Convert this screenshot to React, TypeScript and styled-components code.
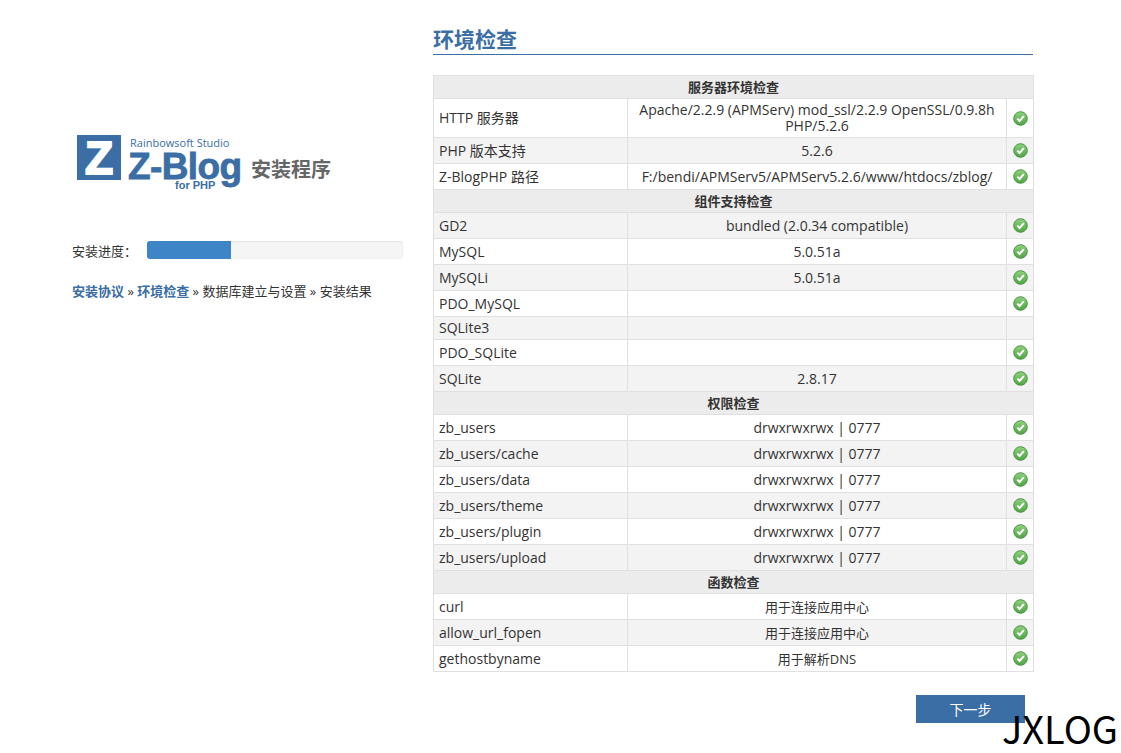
import React from 'react';
import styled, { createGlobalStyle } from 'styled-components';

const GlobalStyle = createGlobalStyle`
  html, body {
    margin: 0;
    padding: 0;
    background: #fff;
  }
  body {
    font-family: 'Open Sans', 'Noto Sans CJK SC', sans-serif;
    font-size: 14px;
    color: #333;
  }
`;

const Page = styled.div`
  position: relative;
  width: 1121px;
  height: 753px;
  overflow: hidden;
  display: flex;
  align-items: flex-start;
  gap: 30px;
  padding-left: 72px;
  box-sizing: border-box;
`;

const LeftPanel = styled.div`
  width: 331px;
  padding-top: 133px;
  flex-shrink: 0;
`;

const LogoRow = styled.div`
  padding-left: 5px;
  height: 62px;
`;

const ProgressRow = styled.div`
  display: flex;
  align-items: center;
  margin-top: 46px;
  height: 18px;
  font-size: 13px;
`;

const ProgressLabel = styled.span`
  width: 75px;
  flex-shrink: 0;
`;

const ProgressTrack = styled.div`
  flex: 1;
  height: 18px;
  background: #f5f5f5;
  border-radius: 3px;
  overflow: hidden;
  box-shadow: inset 0 1px 2px rgba(0, 0, 0, 0.08);
`;

const ProgressFill = styled.div`
  height: 100%;
  background: #3d85c6;
`;

const Steps = styled.div`
  margin-top: 23px;
  font-size: 13px;
  line-height: 18px;
  white-space: nowrap;
`;

const StepDone = styled.b`
  color: #3a6ea5;
`;

const RightPanel = styled.div`
  width: 600px;
  padding-top: 24px;
`;

const Title = styled.h1`
  margin: 0;
  height: 30px;
  font-size: 21px;
  line-height: 30px;
  font-weight: 700;
  color: #3a6ea5;
  border-bottom: 1px solid #3a6ea5;
`;

const CheckTable = styled.table`
  margin-top: 20px;
  width: 600px;
  table-layout: fixed;
  border-collapse: collapse;
  line-height: 16px;
`;

const HeadCell = styled.th`
  padding: 3px 5px;
  border: 1px solid #e0e0e0;
  background: #ececec;
  font-size: 13px;
  font-weight: 700;
  text-align: center;
`;

const Row = styled.tr<{ $alt: boolean }>`
  background: ${(p) => (p.$alt ? '#f3f3f3' : '#fff')};
`;

const NameCell = styled.td`
  padding: 3px 5px;
  border: 1px solid #e0e0e0;
`;

const ValueCell = styled.td<{ $small?: boolean }>`
  padding: 3px 5px;
  border: 1px solid #e0e0e0;
  text-align: center;
  font-size: ${(p) => (p.$small ? '13px' : '14px')};
`;

const IconCell = styled.td`
  padding: 3px 0;
  border: 1px solid #e0e0e0;
`;

const Footer = styled.div`
  display: flex;
  justify-content: flex-end;
  margin-top: 23px;
  padding-right: 8px;
`;

const NextButton = styled.button`
  width: 109px;
  height: 28px;
  border: none;
  padding: 0;
  background: #3a6ea5;
  color: #fff;
  font-family: inherit;
  font-size: 14px;
`;

const Watermark = styled.div`
  position: absolute;
  left: 1002px;
  top: 705px;
  font-family: 'Noto Sans CJK SC', sans-serif;
  font-size: 38px;
  line-height: 46px;
  color: #000;
`;

const Logo = () => (
  <svg width="258" height="62" viewBox="0 0 258 62">
    <rect x="0" y="2" width="44" height="45" fill="#3a6ea5" />
    <text x="22" y="41" textAnchor="middle" fontFamily="'Liberation Sans', sans-serif" fontWeight="700" fontSize="46" fill="#fff" stroke="#fff" strokeWidth="2">Z</text>
    <text x="53" y="14" fontFamily="'Open Sans', sans-serif" fontSize="11" fill="#3a6ea5">Rainbowsoft Studio</text>
    <text x="51" y="46" fontFamily="'Liberation Sans', sans-serif" fontWeight="700" fontSize="37" fill="#3a6ea5" stroke="#3a6ea5" strokeWidth="0.8" textLength="114">Z-Blog</text>
    <text x="98" y="56" fontFamily="'Liberation Sans', sans-serif" fontWeight="700" fontSize="11" fill="#3a6ea5">for PHP</text>
    <text x="174" y="44" fontFamily="'Noto Sans CJK SC', sans-serif" fontWeight="700" fontSize="20" fill="#666">安装程序</text>
  </svg>
);

const CheckIcon = styled.svg`
  display: block;
  margin: 2px auto;
`;

const OkIcon = () => (
  <CheckIcon width="15" height="15" viewBox="0 0 15 15">
    <defs>
      <linearGradient id="okFill" x1="0" y1="0" x2="0" y2="1">
        <stop offset="0" stopColor="#8fd07e" />
        <stop offset="1" stopColor="#4fa544" />
      </linearGradient>
    </defs>
    <circle cx="7.5" cy="7.5" r="6.8" fill="url(#okFill)" stroke="#3f8a3a" strokeWidth="0.9" />
    <path d="M4.3 7.6 L6.6 10 L10.8 5.2" fill="none" stroke="#fff" strokeWidth="1.9" />
  </CheckIcon>
);

type Item = { name: string; value?: string; ok?: boolean; small?: boolean };
type Section = { title: string; items: Item[] };

const perm = 'drwxrwxrwx | 0777';

const sections: Section[] = [
  {
    title: '服务器环境检查',
    items: [
      { name: 'HTTP 服务器', value: 'Apache/2.2.9 (APMServ) mod_ssl/2.2.9 OpenSSL/0.9.8h PHP/5.2.6', ok: true },
      { name: 'PHP 版本支持', value: '5.2.6', ok: true },
      { name: 'Z-BlogPHP 路径', value: 'F:/bendi/APMServ5/APMServ5.2.6/www/htdocs/zblog/', ok: true },
    ],
  },
  {
    title: '组件支持检查',
    items: [
      { name: 'GD2', value: 'bundled (2.0.34 compatible)', ok: true },
      { name: 'MySQL', value: '5.0.51a', ok: true },
      { name: 'MySQLi', value: '5.0.51a', ok: true },
      { name: 'PDO_MySQL', ok: true },
      { name: 'SQLite3' },
      { name: 'PDO_SQLite', ok: true },
      { name: 'SQLite', value: '2.8.17', ok: true },
    ],
  },
  {
    title: '权限检查',
    items: [
      { name: 'zb_users', value: perm, ok: true },
      { name: 'zb_users/cache', value: perm, ok: true },
      { name: 'zb_users/data', value: perm, ok: true },
      { name: 'zb_users/theme', value: perm, ok: true },
      { name: 'zb_users/plugin', value: perm, ok: true },
      { name: 'zb_users/upload', value: perm, ok: true },
    ],
  },
  {
    title: '函数检查',
    items: [
      { name: 'curl', value: '用于连接应用中心', ok: true, small: true },
      { name: 'allow_url_fopen', value: '用于连接应用中心', ok: true, small: true },
      { name: 'gethostbyname', value: '用于解析DNS', ok: true, small: true },
    ],
  },
];

export default function App() {
  let rowIndex = 0;
  return (
    <>
      <GlobalStyle />
      <Page>
        <LeftPanel>
          <LogoRow>
            <Logo />
          </LogoRow>
          <ProgressRow>
            <ProgressLabel>安装进度：</ProgressLabel>
            <ProgressTrack>
              <ProgressFill style={{ width: `${(84 / 256) * 100}%` }} />
            </ProgressTrack>
          </ProgressRow>
          <Steps>
            <StepDone>安装协议</StepDone> » <StepDone>环境检查</StepDone> » 数据库建立与设置 » 安装结果
          </Steps>
        </LeftPanel>
        <RightPanel>
          <Title>环境检查</Title>
          <CheckTable>
            <colgroup>
              <col style={{ width: 194 }} />
              <col style={{ width: 379 }} />
              <col style={{ width: 27 }} />
            </colgroup>
            {sections.map((section) => (
              <tbody key={section.title}>
                <tr>
                  <HeadCell colSpan={3}>{section.title}</HeadCell>
                </tr>
                {section.items.map((item) => {
                  const alt = rowIndex++ % 2 === 1;
                  return (
                    <Row key={item.name} $alt={alt}>
                      <NameCell>{item.name}</NameCell>
                      <ValueCell $small={item.small}>{item.value}</ValueCell>
                      <IconCell>{item.ok && <OkIcon />}</IconCell>
                    </Row>
                  );
                })}
              </tbody>
            ))}
          </CheckTable>
          <Footer>
            <NextButton>下一步</NextButton>
          </Footer>
        </RightPanel>
        <Watermark>JXLOG</Watermark>
      </Page>
    </>
  );
}
